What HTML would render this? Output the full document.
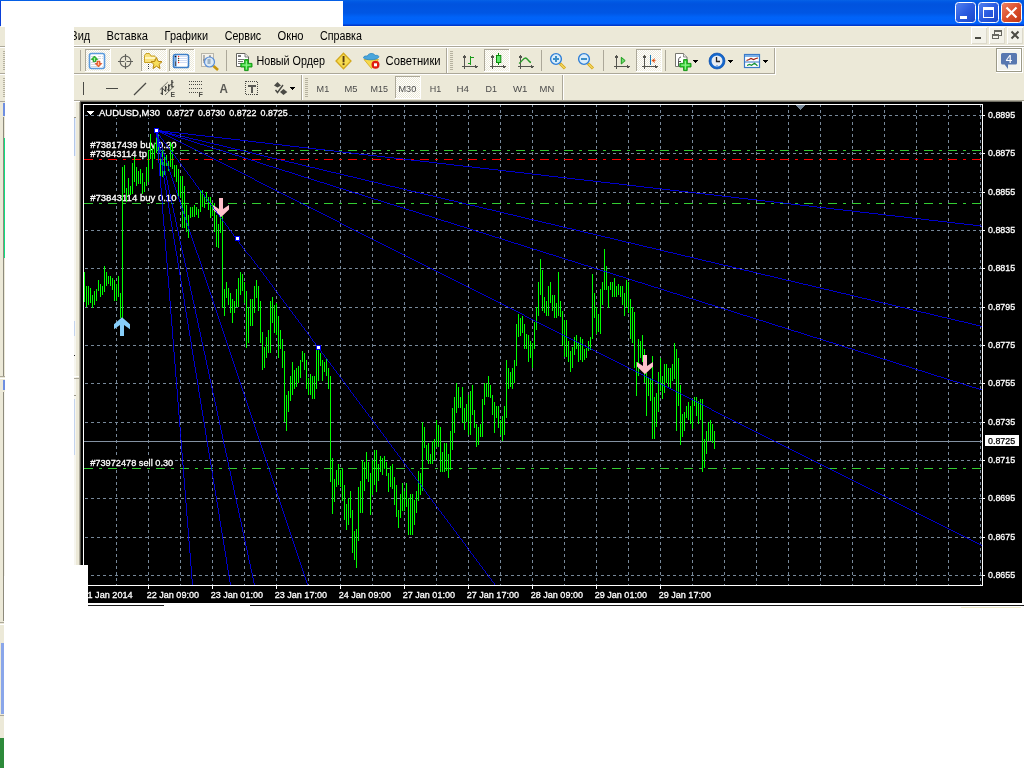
<!DOCTYPE html>
<html><head><meta charset="utf-8"><title>AUDUSD,M30</title>
<style>
html,body{margin:0;padding:0;background:#fff;}
body{width:1024px;height:768px;overflow:hidden;}
svg{display:block;}
text{font-family:"Liberation Sans",sans-serif;white-space:pre;}
svg{will-change:transform;}
.c{shape-rendering:crispEdges;}
</style></head><body>
<svg width="1024" height="768" viewBox="0 0 1024 768">
<defs>
<linearGradient id="tg" x1="0" y1="0" x2="0" y2="1">
<stop offset="0" stop-color="#0662e6"/><stop offset="0.07" stop-color="#0058e4"/><stop offset="0.16" stop-color="#0053de"/><stop offset="0.5" stop-color="#0056e4"/><stop offset="0.66" stop-color="#0063f8"/><stop offset="0.9" stop-color="#0062fc"/><stop offset="0.95" stop-color="#0048dc"/><stop offset="1" stop-color="#0030c0"/>
</linearGradient>
<linearGradient id="bb" x1="0" y1="0" x2="1" y2="1">
<stop offset="0" stop-color="#5583f0"/><stop offset="0.5" stop-color="#2a5be0"/><stop offset="1" stop-color="#1a45c8"/>
</linearGradient>
<linearGradient id="rb" x1="0" y1="0" x2="1" y2="1">
<stop offset="0" stop-color="#ee8468"/><stop offset="0.5" stop-color="#dc4f2c"/><stop offset="1" stop-color="#bf3512"/>
</linearGradient>
<pattern id="hatch" width="2" height="2" patternUnits="userSpaceOnUse"><rect width="2" height="2" fill="#ffffff"/><rect width="1" height="1" fill="#ece9d8"/><rect x="1" y="1" width="1" height="1" fill="#ece9d8"/></pattern>
</defs>

<g id="frame" class="c">
<rect x="0" y="0" width="1024" height="768" fill="#ffffff"/>
<rect x="0" y="0" width="1024" height="26" fill="url(#tg)"/>
<rect x="0" y="26" width="1024" height="77" fill="#ece9d8"/>
<rect x="343" y="26" width="681" height="1" fill="#fbf6e2"/>
</g>
<g id="titlebuttons">
<rect x="955.5" y="2.5" width="20" height="20" rx="3" ry="3" fill="url(#bb)" stroke="#fff" stroke-width="1"/>
<rect x="978.5" y="2.5" width="20" height="20" rx="3" ry="3" fill="url(#bb)" stroke="#fff" stroke-width="1"/>
<rect x="1001.5" y="2.5" width="20" height="20" rx="3" ry="3" fill="url(#rb)" stroke="#fff" stroke-width="1"/>
<rect class="c" x="960" y="16" width="7" height="3" fill="#fff"/>
<rect x="983.5" y="7.5" width="10" height="10" fill="none" stroke="#fff" stroke-width="1" class="c"/><rect class="c" x="983" y="7" width="11" height="3" fill="#fff"/>
<path d="M1006.5 7.5 L1016.5 17.5 M1016.5 7.5 L1006.5 17.5" stroke="#fff" stroke-width="2.2" fill="none"/>
</g>
<g id="menubar">
<g class="c">
<rect x="74" y="45" width="950" height="1" fill="#ffffff"/>
<rect x="74" y="46" width="950" height="1" fill="#aca899"/>
<rect x="74" y="47" width="950" height="1" fill="#ffffff"/>
<rect x="971" y="27" width="16" height="17" fill="#f3f2e9"/>
<rect x="971" y="27" width="16" height="1" fill="#ffffff"/>
<rect x="971" y="27" width="1" height="17" fill="#ffffff"/>
<rect x="972" y="43" width="15" height="1" fill="#dcd9cc"/>
<rect x="986" y="28" width="1" height="16" fill="#dcd9cc"/>
<rect x="989" y="27" width="16" height="17" fill="#f3f2e9"/>
<rect x="989" y="27" width="16" height="1" fill="#ffffff"/>
<rect x="989" y="27" width="1" height="17" fill="#ffffff"/>
<rect x="990" y="43" width="15" height="1" fill="#dcd9cc"/>
<rect x="1004" y="28" width="1" height="16" fill="#dcd9cc"/>
<rect x="1007" y="27" width="16" height="17" fill="#f3f2e9"/>
<rect x="1007" y="27" width="16" height="1" fill="#ffffff"/>
<rect x="1007" y="27" width="1" height="17" fill="#ffffff"/>
<rect x="1008" y="43" width="15" height="1" fill="#dcd9cc"/>
<rect x="1022" y="28" width="1" height="16" fill="#dcd9cc"/>
<rect x="975" y="37" width="6" height="2" fill="#4b4b43"/>
<rect x="992.5" y="34.5" width="6" height="4" fill="none" stroke="#66665e" stroke-width="1"/><rect x="992" y="34" width="7" height="2" fill="#66665e"/>
<rect x="994" y="30" width="8" height="2" fill="#66665e"/><rect x="1001" y="30" width="1" height="6" fill="#66665e"/><rect x="994" y="30" width="1" height="4" fill="#66665e"/><rect x="999" y="35" width="3" height="1" fill="#66665e"/>
</g>
<path d="M1011.5 31.5 L1018.5 38.5 M1018.5 31.5 L1011.5 38.5" stroke="#4b4b43" stroke-width="2" fill="none"/>
<text x="70.3" y="40" font-size="12" fill="#000" textLength="20" lengthAdjust="spacingAndGlyphs">Вид</text>
<text x="106.5" y="40" font-size="12" fill="#000" textLength="41.5" lengthAdjust="spacingAndGlyphs">Вставка</text>
<text x="164.6" y="40" font-size="12" fill="#000" textLength="43.4" lengthAdjust="spacingAndGlyphs">Графики</text>
<text x="224.7" y="40" font-size="12" fill="#000" textLength="36.5" lengthAdjust="spacingAndGlyphs">Сервис</text>
<text x="277.6" y="40" font-size="12" fill="#000" textLength="26" lengthAdjust="spacingAndGlyphs">Окно</text>
<text x="320" y="40" font-size="12" fill="#000" textLength="42" lengthAdjust="spacingAndGlyphs">Справка</text>
</g>
<g id="toolbars" class="c">
<rect x="74" y="73" width="701" height="1" fill="#aca899"/>
<rect x="74" y="74" width="702" height="1" fill="#ffffff"/>
<rect x="446" y="48" width="1" height="25" fill="#aca899"/>
<rect x="447" y="48" width="1" height="25" fill="#ffffff"/>
<rect x="774" y="48" width="1" height="26" fill="#aca899"/>
<rect x="775" y="47" width="1" height="28" fill="#ffffff"/>
<rect x="301" y="75" width="1" height="25" fill="#aca899"/>
<rect x="302" y="75" width="1" height="25" fill="#ffffff"/>
<rect x="562" y="75" width="1" height="25" fill="#aca899"/>
<rect x="563" y="75" width="1" height="25" fill="#ffffff"/>
<rect x="80" y="50" width="1" height="21" fill="#aca899"/>
<rect x="226" y="50" width="1" height="21" fill="#aca899"/>
<rect x="541" y="50" width="1" height="21" fill="#aca899"/>
<rect x="603" y="50" width="1" height="21" fill="#aca899"/>
<rect x="665" y="50" width="1" height="21" fill="#aca899"/>
<rect x="450" y="51" width="3" height="1" fill="#b5b19f"/>
<rect x="450" y="53" width="3" height="1" fill="#b5b19f"/>
<rect x="450" y="55" width="3" height="1" fill="#b5b19f"/>
<rect x="450" y="57" width="3" height="1" fill="#b5b19f"/>
<rect x="450" y="59" width="3" height="1" fill="#b5b19f"/>
<rect x="450" y="61" width="3" height="1" fill="#b5b19f"/>
<rect x="450" y="63" width="3" height="1" fill="#b5b19f"/>
<rect x="450" y="65" width="3" height="1" fill="#b5b19f"/>
<rect x="450" y="67" width="3" height="1" fill="#b5b19f"/>
<rect x="450" y="69" width="3" height="1" fill="#b5b19f"/>
<rect x="305" y="78" width="3" height="1" fill="#b5b19f"/>
<rect x="305" y="80" width="3" height="1" fill="#b5b19f"/>
<rect x="305" y="82" width="3" height="1" fill="#b5b19f"/>
<rect x="305" y="84" width="3" height="1" fill="#b5b19f"/>
<rect x="305" y="86" width="3" height="1" fill="#b5b19f"/>
<rect x="305" y="88" width="3" height="1" fill="#b5b19f"/>
<rect x="305" y="90" width="3" height="1" fill="#b5b19f"/>
<rect x="305" y="92" width="3" height="1" fill="#b5b19f"/>
<rect x="305" y="94" width="3" height="1" fill="#b5b19f"/>
<rect x="305" y="96" width="3" height="1" fill="#b5b19f"/>
<rect x="85" y="49" width="26" height="23" fill="url(#hatch)"/>
<rect x="85" y="49" width="26" height="1" fill="#aca899"/>
<rect x="85" y="49" width="1" height="23" fill="#aca899"/>
<rect x="85" y="71" width="26" height="1" fill="#ffffff"/>
<rect x="110" y="49" width="1" height="23" fill="#ffffff"/>
<rect x="141" y="49" width="26" height="23" fill="url(#hatch)"/>
<rect x="141" y="49" width="26" height="1" fill="#aca899"/>
<rect x="141" y="49" width="1" height="23" fill="#aca899"/>
<rect x="141" y="71" width="26" height="1" fill="#ffffff"/>
<rect x="166" y="49" width="1" height="23" fill="#ffffff"/>
<rect x="169" y="49" width="26" height="23" fill="url(#hatch)"/>
<rect x="169" y="49" width="26" height="1" fill="#aca899"/>
<rect x="169" y="49" width="1" height="23" fill="#aca899"/>
<rect x="169" y="71" width="26" height="1" fill="#ffffff"/>
<rect x="194" y="49" width="1" height="23" fill="#ffffff"/>
<rect x="484" y="49" width="26" height="23" fill="url(#hatch)"/>
<rect x="484" y="49" width="26" height="1" fill="#aca899"/>
<rect x="484" y="49" width="1" height="23" fill="#aca899"/>
<rect x="484" y="71" width="26" height="1" fill="#ffffff"/>
<rect x="509" y="49" width="1" height="23" fill="#ffffff"/>
<rect x="636" y="49" width="26" height="23" fill="url(#hatch)"/>
<rect x="636" y="49" width="26" height="1" fill="#aca899"/>
<rect x="636" y="49" width="1" height="23" fill="#aca899"/>
<rect x="636" y="71" width="26" height="1" fill="#ffffff"/>
<rect x="661" y="49" width="1" height="23" fill="#ffffff"/>
<rect x="395" y="76" width="26" height="23" fill="url(#hatch)"/>
<rect x="395" y="76" width="26" height="1" fill="#aca899"/>
<rect x="395" y="76" width="1" height="23" fill="#aca899"/>
<rect x="395" y="98" width="26" height="1" fill="#ffffff"/>
<rect x="420" y="76" width="1" height="23" fill="#ffffff"/>
<rect x="996" y="48" width="26" height="24" fill="#f3f3ec"/>
<rect x="997" y="49" width="24" height="22" fill="#ffffff"/>
<rect x="998" y="50" width="22" height="20" fill="#f3f3ec"/>
<rect x="996" y="48" width="26" height="1" fill="#9c9a88"/>
<rect x="996" y="48" width="1" height="24" fill="#9c9a88"/>
<rect x="996" y="71" width="26" height="1" fill="#9c9a88"/>
<rect x="1021" y="48" width="1" height="24" fill="#9c9a88"/>
<rect x="996" y="72" width="27" height="1" fill="#ffffff"/>
<rect x="1022" y="48" width="1" height="25" fill="#ffffff"/>
</g>
<g id="icons">
<rect x="89.5" y="53.5" width="15" height="15" rx="2" fill="#fff" stroke="#5b9bdc" stroke-width="1.6"/>
<g class="c" fill="#d5d9df"><rect x="91" y="56" width="3" height="1"/><rect x="98" y="56" width="3" height="1"/><rect x="102" y="56" width="1" height="1"/><rect x="98" y="58" width="3" height="1"/><rect x="102" y="58" width="1" height="1"/><rect x="91" y="62" width="4" height="1"/><rect x="91" y="64" width="6" height="1"/><rect x="91" y="66" width="6" height="1"/><rect x="102" y="66" width="1" height="1"/></g>
<polygon points="94.5,56 97.8,59.4 96,59.4 96,61.6 93,61.6 93,59.4 91.2,59.4" fill="#3cc83c" stroke="#0c8a0c" stroke-width=".7"/><rect x="94" y="58" width="1" height="3" fill="#a8f0a8"/>
<polygon points="98.5,67 101.8,63.5 100,63.5 100,61.2 97,61.2 97,63.5 95.2,63.5" fill="#f4703c" stroke="#d04010" stroke-width=".7"/><rect x="98" y="62" width="1" height="3" fill="#ffc0a0"/>
<circle cx="125.5" cy="61.5" r="5.4" fill="none" stroke="#60605a" stroke-width="1.1"/><path d="M125.5 54V69M118 61.5H133" stroke="#60605a" stroke-width="1.1" fill="none"/><rect x="124.5" y="60.5" width="2" height="2" fill="#ece9d8"/>
<path d="M144.5 62.5V55.5L146 53.5H149.5L151 56H155V62.5Z" fill="#f8e07a" stroke="#c9a227" stroke-width="1"/><rect x="145" y="57" width="10" height="2" fill="#fff6c0"/>
<g class="c" fill="#333"><rect x="148" y="64" width="1" height="1"/><rect x="148" y="66" width="1" height="1"/><rect x="148" y="68" width="1" height="1"/></g>
<polygon points="156.5,57.5 158.2,61.4 162,61.7 159.1,64.3 160,68.5 156.5,66.2 153,68.5 153.9,64.3 151,61.7 154.8,61.4" fill="#f7de5a" stroke="#b8860b" stroke-width="1"/>
<rect x="173.5" y="54.5" width="15" height="13" rx="1.8" fill="#fff" stroke="#3d7fc8" stroke-width="1.6"/><rect x="174.3" y="55.3" width="2.4" height="11.4" fill="#6a9ee0"/><rect x="175" y="61.5" width="1" height="4.5" fill="#555"/><circle cx="175.5" cy="56.5" r=".8" fill="#111"/>
<g class="c" fill="#cfdcf5"><rect x="180" y="56" width="8" height="1"/><rect x="180" y="58" width="8" height="1"/><rect x="180" y="60" width="8" height="1"/><rect x="180" y="62" width="8" height="1"/></g>
<circle cx="178.6" cy="56.5" r=".75" fill="#f02020"/><circle cx="178.6" cy="58.5" r=".75" fill="#334422"/><circle cx="178.6" cy="60.5" r=".75" fill="#334422"/><circle cx="178.6" cy="62.5" r=".75" fill="#f02020"/>
<rect x="201.5" y="53.5" width="12" height="13" fill="#f4f2ea" stroke="#b9b6aa" stroke-width="1"/><path d="M204 55V63M203 60H205M210 55V62M209 57H211" stroke="#777" stroke-width="1" fill="none"/>
<path d="M213.5 66L218 70" stroke="#c8960c" stroke-width="2.6"/><circle cx="209.5" cy="62" r="5" fill="#d8e8f6" fill-opacity=".9" stroke="#5b8fd8" stroke-width="1.2"/><rect x="207.5" y="59" width="3" height="5" fill="#9ab0c4"/>
<path d="M236.5 53.5H245L248.5 57V66.5H236.5Z" fill="#fff" stroke="#66665f" stroke-width="1"/><path d="M245 53.5V57H248.5" fill="#e8e8e8" stroke="#66665f" stroke-width=".8"/><g class="c" fill="#777"><rect x="238" y="55" width="3" height="2"/><rect x="238" y="59" width="6" height="1"/><rect x="238" y="61" width="5" height="1"/><rect x="238" y="63" width="3" height="1"/></g>
<path d="M244.6 59.6H248.2V63.4H252V67H248.2V70.6H244.6V67H240.8V63.4H244.6Z" fill="#2fd02f" stroke="#0f8f0f" stroke-width=".9"/><path d="M246.4 61V69.4M242.2 65.2H250.6" stroke="#8cf08c" stroke-width="1.2" fill="none"/>
<polygon points="343.5,53.2 351,61 343.5,68.8 336,61" fill="#f7dc50" stroke="#d4a91e" stroke-width="1.3"/><rect x="342.6" y="56" width="1.9" height="6.3" fill="#5a3c10"/><rect x="342.6" y="63.2" width="1.9" height="1.9" fill="#5a3c10"/>
<polygon points="364,59.5 378.5,59.5 371.5,68.5" fill="#f7d94a" stroke="#d4a91e" stroke-width=".8"/><path d="M363.5 58C363.5 55.5 366.5 56 367.5 56C368 53 374 52.5 375 55.5C377 55 379.5 55.5 378.5 57.5C376 60.5 366 60.5 363.5 58Z" fill="#4aa6dc" stroke="#2a86c0" stroke-width=".8"/>
<circle cx="375.5" cy="64.8" r="4" fill="#e01c10"/><rect x="374" y="63.3" width="3" height="3" fill="#fff"/>
<g class="c" fill="#55554f"><rect x="464" y="55" width="1.3" height="14"/><rect x="462" y="66" width="15" height="1.3"/><polygon points="462.5,58 464.6,54.5 466.8,58"/><polygon points="474.5,64.2 478,66.6 474.5,69"/></g>
<g class="c" fill="#1a9a1a"><rect x="470" y="56" width="1.3" height="9"/><rect x="471" y="57" width="2.5" height="1.3"/><rect x="468" y="63" width="2.5" height="1.3"/></g>
<g class="c" fill="#55554f"><rect x="492" y="55" width="1.3" height="14"/><rect x="490" y="66" width="15" height="1.3"/><polygon points="490.5,58 492.6,54.5 494.8,58"/><polygon points="502.5,64.2 506,66.6 502.5,69"/></g>
<rect class="c" x="498" y="53" width="1.3" height="12" fill="#0a8a0a"/><rect x="496.5" y="55.5" width="4.3" height="7" fill="#5fe86a" stroke="#0a8a0a" stroke-width="1"/>
<g class="c" fill="#55554f"><rect x="520" y="55" width="1.3" height="14"/><rect x="518" y="66" width="15" height="1.3"/><polygon points="518.5,58 520.6,54.5 522.8,58"/><polygon points="530.5,64.2 534,66.6 530.5,69"/></g>
<path d="M519 63.5C522 62 523 58 525.5 58C527.5 58 528.5 62 531 62.5" fill="none" stroke="#2a9a2a" stroke-width="1.3"/>
<path d="M560 63.5L565 68.5" stroke="#d8a818" stroke-width="3"/><path d="M560.6 64.1L564.6 68.1" stroke="#f5e070" stroke-width="1.2"/>
<circle cx="556" cy="59" r="5.4" fill="#dbeefb" stroke="#2f7fd6" stroke-width="1.4"/>
<rect x="553" y="58" width="6" height="2" fill="#3d8fc8"/>
<rect x="555" y="56" width="2" height="6" fill="#3d8fc8"/>
<path d="M588 63.5L593 68.5" stroke="#d8a818" stroke-width="3"/><path d="M588.6 64.1L592.6 68.1" stroke="#f5e070" stroke-width="1.2"/>
<circle cx="584" cy="59" r="5.4" fill="#dbeefb" stroke="#2f7fd6" stroke-width="1.4"/>
<rect x="581" y="58" width="6" height="2" fill="#3d8fc8"/>
<g class="c" fill="#55554f"><rect x="616" y="55" width="1.3" height="14"/><rect x="614" y="66" width="15" height="1.3"/><polygon points="614.5,58 616.6,54.5 618.8,58"/><polygon points="626.5,64.2 630,66.6 626.5,69"/></g>
<polygon points="621.3,57.3 625.2,60.6 621.3,64" fill="#6fdc6f" stroke="#1a9a1a" stroke-width="1"/>
<g class="c" fill="#55554f"><rect x="644" y="55" width="1.3" height="14"/><rect x="642" y="66" width="15" height="1.3"/><polygon points="642.5,58 644.6,54.5 646.8,58"/><polygon points="654.5,64.2 658,66.6 654.5,69"/></g>
<rect class="c" x="650" y="55" width="1.3" height="10" fill="#1a7ab8"/><polygon points="651.5,60.5 655,58 654.3,60 656.2,60.5 654.3,61.2 655,63.2" fill="#e0551a"/>
<path d="M675.5 53.5H683.5L687 57V66.5H675.5Z" fill="#fff" stroke="#77776f" stroke-width="1"/><path d="M683.5 53.5V57H687" fill="#e8e8e8" stroke="#77776f" stroke-width=".8"/><path d="M681 57C678.5 57 678.5 60 678.5 61.5V66M678 61.5H681" stroke="#555" stroke-width="1" fill="none"/>
<path d="M683.6 59.6H687.2V63.4H691V67H687.2V70.6H683.6V67H679.8V63.4H683.6Z" fill="#2fd02f" stroke="#0f8f0f" stroke-width=".9"/><path d="M685.4 61V69.4M681.2 65.2H689.6" stroke="#8cf08c" stroke-width="1.2" fill="none"/>
<polygon class="c" points="693,60 698,60 695.5,63" fill="#000"/>
<polygon class="c" points="728,60 733,60 730.5,63" fill="#000"/>
<polygon class="c" points="763,60 768,60 765.5,63" fill="#000"/>
<polygon class="c" points="290,87 295,87 292.5,90" fill="#000"/>
<circle cx="717" cy="61" r="6.8" fill="#e9edf2" stroke="#1668cc" stroke-width="2.6"/><circle cx="717" cy="61" r="8" fill="none" stroke="#0a4aa8" stroke-width=".6"/><path d="M716.5 57V61.5H720" stroke="#222" stroke-width="1.3" fill="none"/><rect x="716" y="65" width="2" height="1" fill="#8cb4ee"/>
<rect x="744.5" y="54.5" width="15" height="13" fill="#fff" stroke="#3a7ac8" stroke-width="1.2"/><rect x="745" y="55" width="14" height="2" fill="#7ab0e8"/><rect x="745" y="61.5" width="14" height="1" fill="#3a7ac8"/>
<path d="M746.5 60.5L749 59.5L751 58.5L753.5 59.5L756 58.5L758 58" stroke="#a02010" stroke-width="1.2" fill="none"/><path d="M747 65.5L749.5 64.5L751.5 65.3L754.5 63.3L757.5 65.8" stroke="#109030" stroke-width="1.2" fill="none"/>
<path d="M1002.5 53H1015.5Q1017 53 1017 54.5V63Q1017 64.5 1015.5 64.5H1008V69L1004.6 64.5H1002.5Q1001 64.5 1001 63V54.5Q1001 53 1002.5 53Z" fill="#5878b0"/>
<text x="1005.7" y="63" font-size="11" fill="#fff" stroke="#fff" stroke-width=".1" textLength="6.4" lengthAdjust="spacingAndGlyphs">4</text>
<g class="c" fill="#4a4a45"><rect x="83" y="82" width="1.3" height="13"/><rect x="106" y="88" width="12" height="1.3"/></g>
<path d="M134 95L146 83" stroke="#4a4a45" stroke-width="1.2"/>
<path d="M159.8 89.8L167.8 82M165 95L174.2 86.2" stroke="#66665f" stroke-width=".9" fill="none"/>
<path d="M162.3 87.5V95M165.6 86V91.8M168.7 84.2V91M171.9 80V87.6" stroke="#4a4a45" stroke-width="1.4" fill="none"/><path d="M160.6 93.4H162.3M162.3 89.2H164M164 90.4H165.6M165.6 87.8H167M167.2 89.8H168.7M168.7 85.6H170.2M170.4 84.6H171.9M171.9 82.4H173.4M171.9 86.6H173.6" stroke="#4a4a45" stroke-width="1.1" fill="none"/>
<text x="170.6" y="97" font-size="7.5" font-weight="bold" fill="#4a4a45" textLength="4.6" lengthAdjust="spacingAndGlyphs">E</text>
<line class="c" x1="189" x2="202" y1="81.5" y2="81.5" stroke="#4a4a45" stroke-width="1" stroke-dasharray="1 1"/>
<line class="c" x1="189" x2="202" y1="84.5" y2="84.5" stroke="#4a4a45" stroke-width="1" stroke-dasharray="1 1"/>
<line class="c" x1="189" x2="202" y1="88.5" y2="88.5" stroke="#4a4a45" stroke-width="1" stroke-dasharray="1 1"/>
<line class="c" x1="189" x2="198" y1="92.5" y2="92.5" stroke="#4a4a45" stroke-width="1" stroke-dasharray="1 1"/>
<text x="198.6" y="97" font-size="7.5" font-weight="bold" fill="#4a4a45" textLength="4.4" lengthAdjust="spacingAndGlyphs">F</text>
<text x="219.6" y="93" font-size="12" font-weight="bold" fill="#5a5a55" textLength="8.4" lengthAdjust="spacingAndGlyphs">A</text>
<rect class="c" x="245.5" y="81.5" width="12" height="13" fill="none" stroke="#4a4a45" stroke-width="1" stroke-dasharray="1 1"/><rect class="c" x="245" y="81" width="2" height="1" fill="#4a4a45"/>
<g class="c" fill="#5a5a55"><rect x="248" y="85" width="8" height="1.6"/><rect x="251.2" y="85" width="1.8" height="8"/></g>
<polygon points="277.5,82 281,85.5 277.5,87.5 274,85.5" fill="#4a4a45"/><polygon points="283.5,89 287.3,92 283.5,95 280,92" fill="#4a4a45"/><path d="M275.5 90L277.5 92.5L283 85" stroke="#4a4a45" stroke-width="1.4" fill="none"/>
</g>
<g id="tbtext">
<text x="256.4" y="65" font-size="12" fill="#000" textLength="68.6" lengthAdjust="spacingAndGlyphs">Новый Ордер</text>
<text x="385.6" y="65" font-size="12" fill="#000" textLength="55" lengthAdjust="spacingAndGlyphs">Советники</text>
<text x="316.6" y="92" font-size="9.7" fill="#4a4a4a" textLength="12.6" lengthAdjust="spacingAndGlyphs">M1</text>
<text x="344.4" y="92" font-size="9.7" fill="#4a4a4a" textLength="13" lengthAdjust="spacingAndGlyphs">M5</text>
<text x="370.6" y="92" font-size="9.7" fill="#4a4a4a" textLength="17.5" lengthAdjust="spacingAndGlyphs">M15</text>
<text x="398.5" y="92" font-size="9.7" fill="#4a4a4a" textLength="17.8" lengthAdjust="spacingAndGlyphs">M30</text>
<text x="429.7" y="92" font-size="9.7" fill="#4a4a4a" textLength="11.5" lengthAdjust="spacingAndGlyphs">H1</text>
<text x="456.5" y="92" font-size="9.7" fill="#4a4a4a" textLength="12.5" lengthAdjust="spacingAndGlyphs">H4</text>
<text x="485.5" y="92" font-size="9.7" fill="#4a4a4a" textLength="11.5" lengthAdjust="spacingAndGlyphs">D1</text>
<text x="513" y="92" font-size="9.7" fill="#4a4a4a" textLength="14.5" lengthAdjust="spacingAndGlyphs">W1</text>
<text x="539.6" y="92" font-size="9.7" fill="#4a4a4a" textLength="14.7" lengthAdjust="spacingAndGlyphs">MN</text>
</g>
<g id="chartwin" class="c">
<rect x="74" y="102" width="5" height="463" fill="#ece9d8"/>
<rect x="74" y="102" width="2" height="463" fill="#f6f5ee"/>
<rect x="74" y="100" width="950" height="1" fill="#aca899"/>
<rect x="74" y="101" width="6" height="1" fill="#ffffff"/>
<rect x="80" y="101" width="944" height="1" fill="#716f64"/>
<rect x="79" y="102" width="1" height="501" fill="#aca899"/>
<rect x="80" y="102" width="1" height="501" fill="#55534a"/>
<rect x="81" y="102" width="941" height="501" fill="#000"/>
<rect x="1022" y="101" width="1" height="504" fill="#ffffff"/>
<rect x="1023" y="101" width="1" height="504" fill="#ffffff"/>
<rect x="74" y="118" width="1" height="38" fill="#b4c8ea"/>
<rect x="75" y="118" width="1" height="38" fill="#e6ecf6"/>
<rect x="74" y="117" width="2" height="1" fill="#9a978a"/>
<rect x="74" y="321" width="1" height="15" fill="#c4d4ee"/>
<rect x="74" y="355" width="1" height="1" fill="#222"/>
<rect x="74" y="376" width="5" height="1" fill="#ffffff"/>
<rect x="74" y="378" width="5" height="1" fill="#aca899"/>
<rect x="74" y="399" width="1" height="56" fill="#c4d4ee"/>
<rect x="74" y="395" width="2" height="1" fill="#9a978a"/>
</g>
<g id="chart">
<g class="c">
<line x1="85" x2="982" y1="115.5" y2="115.5" stroke="#778899" stroke-width="1" stroke-dasharray="3 3"/>
<line x1="85" x2="982" y1="153.5" y2="153.5" stroke="#778899" stroke-width="1" stroke-dasharray="3 3"/>
<line x1="85" x2="982" y1="192.5" y2="192.5" stroke="#778899" stroke-width="1" stroke-dasharray="3 3"/>
<line x1="85" x2="982" y1="230.5" y2="230.5" stroke="#778899" stroke-width="1" stroke-dasharray="3 3"/>
<line x1="85" x2="982" y1="268.5" y2="268.5" stroke="#778899" stroke-width="1" stroke-dasharray="3 3"/>
<line x1="85" x2="982" y1="307.5" y2="307.5" stroke="#778899" stroke-width="1" stroke-dasharray="3 3"/>
<line x1="85" x2="982" y1="345.5" y2="345.5" stroke="#778899" stroke-width="1" stroke-dasharray="3 3"/>
<line x1="85" x2="982" y1="383.5" y2="383.5" stroke="#778899" stroke-width="1" stroke-dasharray="3 3"/>
<line x1="85" x2="982" y1="422.5" y2="422.5" stroke="#778899" stroke-width="1" stroke-dasharray="3 3"/>
<line x1="85" x2="982" y1="460.5" y2="460.5" stroke="#778899" stroke-width="1" stroke-dasharray="3 3"/>
<line x1="85" x2="982" y1="498.5" y2="498.5" stroke="#778899" stroke-width="1" stroke-dasharray="3 3"/>
<line x1="85" x2="982" y1="537.5" y2="537.5" stroke="#778899" stroke-width="1" stroke-dasharray="3 3"/>
<line x1="85" x2="982" y1="575.5" y2="575.5" stroke="#778899" stroke-width="1" stroke-dasharray="3 3"/>
<line x1="116.5" x2="116.5" y1="104" y2="585" stroke="#778899" stroke-width="1" stroke-dasharray="3 3"/>
<line x1="148.5" x2="148.5" y1="104" y2="585" stroke="#778899" stroke-width="1" stroke-dasharray="3 3"/>
<line x1="180.5" x2="180.5" y1="104" y2="585" stroke="#778899" stroke-width="1" stroke-dasharray="3 3"/>
<line x1="212.5" x2="212.5" y1="104" y2="585" stroke="#778899" stroke-width="1" stroke-dasharray="3 3"/>
<line x1="244.5" x2="244.5" y1="104" y2="585" stroke="#778899" stroke-width="1" stroke-dasharray="3 3"/>
<line x1="276.5" x2="276.5" y1="104" y2="585" stroke="#778899" stroke-width="1" stroke-dasharray="3 3"/>
<line x1="308.5" x2="308.5" y1="104" y2="585" stroke="#778899" stroke-width="1" stroke-dasharray="3 3"/>
<line x1="340.5" x2="340.5" y1="104" y2="585" stroke="#778899" stroke-width="1" stroke-dasharray="3 3"/>
<line x1="372.5" x2="372.5" y1="104" y2="585" stroke="#778899" stroke-width="1" stroke-dasharray="3 3"/>
<line x1="404.5" x2="404.5" y1="104" y2="585" stroke="#778899" stroke-width="1" stroke-dasharray="3 3"/>
<line x1="436.5" x2="436.5" y1="104" y2="585" stroke="#778899" stroke-width="1" stroke-dasharray="3 3"/>
<line x1="468.5" x2="468.5" y1="104" y2="585" stroke="#778899" stroke-width="1" stroke-dasharray="3 3"/>
<line x1="500.5" x2="500.5" y1="104" y2="585" stroke="#778899" stroke-width="1" stroke-dasharray="3 3"/>
<line x1="532.5" x2="532.5" y1="104" y2="585" stroke="#778899" stroke-width="1" stroke-dasharray="3 3"/>
<line x1="564.5" x2="564.5" y1="104" y2="585" stroke="#778899" stroke-width="1" stroke-dasharray="3 3"/>
<line x1="596.5" x2="596.5" y1="104" y2="585" stroke="#778899" stroke-width="1" stroke-dasharray="3 3"/>
<line x1="628.5" x2="628.5" y1="104" y2="585" stroke="#778899" stroke-width="1" stroke-dasharray="3 3"/>
<line x1="660.5" x2="660.5" y1="104" y2="585" stroke="#778899" stroke-width="1" stroke-dasharray="3 3"/>
<line x1="692.5" x2="692.5" y1="104" y2="585" stroke="#778899" stroke-width="1" stroke-dasharray="3 3"/>
<line x1="724.5" x2="724.5" y1="104" y2="585" stroke="#778899" stroke-width="1" stroke-dasharray="3 3"/>
<line x1="756.5" x2="756.5" y1="104" y2="585" stroke="#778899" stroke-width="1" stroke-dasharray="3 3"/>
<line x1="788.5" x2="788.5" y1="104" y2="585" stroke="#778899" stroke-width="1" stroke-dasharray="3 3"/>
<line x1="820.5" x2="820.5" y1="104" y2="585" stroke="#778899" stroke-width="1" stroke-dasharray="3 3"/>
<line x1="852.5" x2="852.5" y1="104" y2="585" stroke="#778899" stroke-width="1" stroke-dasharray="3 3"/>
<line x1="884.5" x2="884.5" y1="104" y2="585" stroke="#778899" stroke-width="1" stroke-dasharray="3 3"/>
<line x1="916.5" x2="916.5" y1="104" y2="585" stroke="#778899" stroke-width="1" stroke-dasharray="3 3"/>
<line x1="948.5" x2="948.5" y1="104" y2="585" stroke="#778899" stroke-width="1" stroke-dasharray="3 3"/>
<line x1="980.5" x2="980.5" y1="104" y2="585" stroke="#778899" stroke-width="1" stroke-dasharray="3 3"/>
<polygon points="795.5,105 805.5,105 800.5,110.3" fill="#778899"/>
<rect x="83" y="104" width="900" height="1" fill="#ffffff"/>
<rect x="83" y="104" width="1" height="482" fill="#ffffff"/>
<rect x="982" y="104" width="1" height="482" fill="#ffffff"/>
<rect x="83" y="585" width="900" height="1" fill="#ffffff"/>
<rect x="983" y="115" width="2" height="1" fill="#ffffff"/>
<rect x="983" y="153" width="2" height="1" fill="#ffffff"/>
<rect x="983" y="192" width="2" height="1" fill="#ffffff"/>
<rect x="983" y="230" width="2" height="1" fill="#ffffff"/>
<rect x="983" y="268" width="2" height="1" fill="#ffffff"/>
<rect x="983" y="307" width="2" height="1" fill="#ffffff"/>
<rect x="983" y="345" width="2" height="1" fill="#ffffff"/>
<rect x="983" y="383" width="2" height="1" fill="#ffffff"/>
<rect x="983" y="422" width="2" height="1" fill="#ffffff"/>
<rect x="983" y="460" width="2" height="1" fill="#ffffff"/>
<rect x="983" y="498" width="2" height="1" fill="#ffffff"/>
<rect x="983" y="537" width="2" height="1" fill="#ffffff"/>
<rect x="983" y="575" width="2" height="1" fill="#ffffff"/>
<rect x="148" y="585" width="1" height="4" fill="#ffffff"/>
<rect x="212" y="585" width="1" height="4" fill="#ffffff"/>
<rect x="276" y="585" width="1" height="4" fill="#ffffff"/>
<rect x="340" y="585" width="1" height="4" fill="#ffffff"/>
<rect x="404" y="585" width="1" height="4" fill="#ffffff"/>
<rect x="468" y="585" width="1" height="4" fill="#ffffff"/>
<rect x="532" y="585" width="1" height="4" fill="#ffffff"/>
<rect x="596" y="585" width="1" height="4" fill="#ffffff"/>
<rect x="660" y="585" width="1" height="4" fill="#ffffff"/>
<rect x="84" y="441" width="898" height="1" fill="#8492a3"/>
<line x1="84" x2="982" y1="150.5" y2="150.5" stroke="#32cd32" stroke-width="1" stroke-dasharray="9 6 3 6"/>
<line x1="84" x2="982" y1="159.5" y2="159.5" stroke="#ff0000" stroke-width="1" stroke-dasharray="9 6 3 6"/>
<line x1="84" x2="982" y1="203.5" y2="203.5" stroke="#32cd32" stroke-width="1" stroke-dasharray="9 6 3 6"/>
<line x1="84" x2="982" y1="468.5" y2="468.5" stroke="#32cd32" stroke-width="1" stroke-dasharray="9 6 3 6"/>
<rect x="100" y="107" width="189" height="11" fill="#000"/>
<rect x="84" y="139" width="94" height="11" fill="#000"/>
<rect x="84" y="148" width="64" height="11" fill="#000"/>
<rect x="84" y="192" width="94" height="11" fill="#000"/>
<rect x="84" y="457" width="91" height="11" fill="#000"/>
</g>
<text x="90.2" y="148" font-size="9.6" fill="#fff" textLength="86.3" lengthAdjust="spacingAndGlyphs" stroke="#fff" stroke-width=".3">#73817439 buy 0.20</text>
<text x="90.2" y="157" font-size="9.6" fill="#fff" textLength="56.7" lengthAdjust="spacingAndGlyphs" stroke="#fff" stroke-width=".3">#73843114 tp</text>
<text x="90.2" y="201" font-size="9.6" fill="#fff" textLength="86.3" lengthAdjust="spacingAndGlyphs" stroke="#fff" stroke-width=".3">#73843114 buy 0.10</text>
<text x="90.2" y="466" font-size="9.6" fill="#fff" textLength="83" lengthAdjust="spacingAndGlyphs" stroke="#fff" stroke-width=".3">#73972478 sell 0.30</text>
<path class="c" d="M84.5 272V302M86.5 286V307M88.5 286V305M90.5 288V303M92.5 295V308M94.5 291V305M96.5 289V301M98.5 280V291M100.5 284V297M102.5 286V295M104.5 266V292M106.5 272V286M108.5 276V284M110.5 276V286M112.5 278V290M114.5 280V301M116.5 284V301M118.5 276V297M120.5 293V318M122.5 167V318M124.5 165V193M126.5 188V202M128.5 178V195M130.5 186V195M132.5 163V194M134.5 157V182M136.5 167V186M138.5 171V184M140.5 169V184M142.5 173V194M144.5 182V192M146.5 167V186M148.5 150V182M150.5 134V159M152.5 148V169M154.5 143V159M156.5 137V153M158.5 134V161M160.5 158V176M162.5 149V177M164.5 157V175M166.5 155V166M168.5 161V171M170.5 142V167M172.5 144V169M174.5 165V177M176.5 165V182M178.5 169V197M180.5 176V198M182.5 176V228M184.5 186V228M186.5 205V232M188.5 215V238M190.5 207V218M192.5 207V217M194.5 205V217M196.5 207V215M198.5 209V218M200.5 190V212M202.5 190V207M204.5 196V208M206.5 192V202M208.5 197V210M210.5 197V218M212.5 203V216M214.5 203V232M216.5 215V247M218.5 224V248M220.5 216V233M222.5 216V308M224.5 289V316M226.5 282V298M228.5 288V305M230.5 293V313M232.5 299V323M234.5 301V313M236.5 289V307M238.5 278V307M240.5 272V295M242.5 274V291M244.5 282V303M246.5 291V348M248.5 307V343M250.5 299V326M252.5 299V326M254.5 286V313M256.5 280V298M258.5 286V311M260.5 301V343M262.5 332V370M264.5 347V368M266.5 337V358M268.5 330V353M270.5 301V353M272.5 297V323M274.5 305V333M276.5 303V335M278.5 316V358M280.5 330V349M282.5 339V368M284.5 351V422M286.5 395V431M288.5 391V412M290.5 376V401M292.5 362V395M294.5 370V389M296.5 368V387M298.5 366V383M300.5 360V378M302.5 351V362M304.5 353V370M306.5 360V389M308.5 378V395M310.5 374V395M312.5 376V399M314.5 376V399M316.5 350V389M318.5 350V381M320.5 353V366M322.5 360V381M324.5 362V372M326.5 359V376M328.5 368V389M330.5 376V482M332.5 458V514M334.5 479V502M336.5 470V487M338.5 464V485M340.5 470V487M342.5 468V501M344.5 485V520M346.5 504V530M348.5 498V525M350.5 491V518M352.5 510V553M354.5 531V560M356.5 529V568M358.5 487V541M360.5 481V513M362.5 460V513M364.5 462V491M366.5 452V479M368.5 462V482M370.5 473V515M372.5 460V495M374.5 450V485M376.5 450V492M378.5 464V481M380.5 456V472M382.5 458V475M384.5 456V469M386.5 462V476M388.5 473V492M390.5 466V487M392.5 464V489M394.5 477V505M396.5 485V517M398.5 510V528M400.5 494V518M402.5 483V511M404.5 491V511M406.5 483V507M408.5 498V535M410.5 494V535M412.5 494V535M414.5 500V525M416.5 491V513M418.5 471V501M420.5 473V495M422.5 422V491M424.5 427V448M426.5 445V460M428.5 443V464M430.5 454V464M432.5 441V464M434.5 439V460M436.5 420V447M438.5 425V447M440.5 427V472M442.5 452V472M444.5 443V472M446.5 443V471M448.5 454V478M450.5 431V470M452.5 408V450M454.5 397V433M456.5 383V413M458.5 387V408M460.5 397V408M462.5 387V423M464.5 408V430M466.5 404V422M468.5 395V435M470.5 391V435M472.5 385V415M474.5 410V428M476.5 424V447M478.5 427V445M480.5 424V437M482.5 399V437M484.5 383V405M486.5 383V397M488.5 376V397M490.5 385V398M492.5 395V415M494.5 402V433M496.5 406V418M498.5 406V428M500.5 420V435M502.5 416V441M504.5 406V435M506.5 360V418M508.5 368V389M510.5 372V387M512.5 368V389M514.5 360V383M516.5 324V366M518.5 314V337M520.5 318V336M522.5 316V333M524.5 324V349M526.5 334V349M528.5 335V362M530.5 341V358M532.5 343V368M534.5 322V349M536.5 307V330M538.5 282V316M540.5 259V295M542.5 270V311M544.5 297V313M546.5 301V316M548.5 286V316M550.5 282V303M552.5 295V311M554.5 295V318M556.5 303V318M558.5 272V316M560.5 301V317M562.5 311V346M564.5 320V357M566.5 320V357M568.5 341V362M570.5 351V372M572.5 347V368M574.5 337V355M576.5 335V349M578.5 343V362M580.5 337V360M582.5 339V362M584.5 349V360M586.5 348V358M588.5 341V351M590.5 337V350M592.5 274V339M594.5 293V318M596.5 307V334M598.5 314V332M600.5 289V334M602.5 282V305M604.5 249V290M606.5 266V290M608.5 286V308M610.5 282V290M612.5 282V297M614.5 278V297M616.5 286V297M618.5 284V295M620.5 286V297M622.5 286V305M624.5 293V316M626.5 280V307M628.5 282V313M630.5 299V339M632.5 307V343M634.5 312V368M636.5 362V396M638.5 339V376M640.5 341V358M642.5 335V362M644.5 349V383M646.5 373V416M648.5 378V396M650.5 378V401M652.5 356V439M654.5 397V439M656.5 393V427M658.5 372V412M660.5 358V391M662.5 376V399M664.5 364V393M666.5 364V383M668.5 368V387M670.5 368V389M672.5 364V381M674.5 343V379M676.5 349V431M678.5 358V406M680.5 385V445M682.5 414V437M684.5 412V431M686.5 406V418M688.5 402V420M690.5 406V424M692.5 400V429M694.5 397V406M696.5 397V416M698.5 401V424M700.5 399V420M702.5 399V472M704.5 439V468M706.5 431V454M708.5 422V441M710.5 420V441M712.5 424V443M714.5 431V449" stroke="#00ff00" stroke-width="1" fill="none"/>
<polygon points="219,198 223,198 223,209 229,205 229,209.6 221.5,216.8 220.5,216.8 213,209.6 213,205 219,209" fill="#ffc0cb"/>
<polygon points="643,355 647,355 647,366 653,362 653,366.6 645.5,373.8 644.5,373.8 637,366.6 637,362 643,366" fill="#ffc0cb"/>
<polygon points="122,317.2 130,324.2 130,329.3 124,325.0 124,336.0 120,336.0 120,325.0 114,329.3 114,324.2" fill="#87cefa"/>
<line x1="156.5" y1="130.5" x2="982" y2="226.1" stroke="#0000ff" stroke-width=".8" class="c"/>
<line x1="156.5" y1="130.5" x2="982" y2="326.4" stroke="#0000ff" stroke-width=".8" class="c"/>
<line x1="156.5" y1="130.5" x2="982" y2="390" stroke="#0000ff" stroke-width=".8" class="c"/>
<line x1="156.5" y1="130.5" x2="982" y2="545.5" stroke="#0000ff" stroke-width=".8" class="c"/>
<line x1="156.5" y1="130.5" x2="495.2" y2="585" stroke="#0000ff" stroke-width=".8" class="c"/>
<line x1="156.5" y1="130.5" x2="307.5" y2="585" stroke="#0000ff" stroke-width=".8" class="c"/>
<line x1="156.5" y1="130.5" x2="254.5" y2="585" stroke="#0000ff" stroke-width=".8" class="c"/>
<line x1="156.5" y1="130.5" x2="230.5" y2="585" stroke="#0000ff" stroke-width=".8" class="c"/>
<line x1="156.5" y1="130.5" x2="192.5" y2="585" stroke="#0000ff" stroke-width=".8" class="c"/>
<rect class="c" x="154" y="128" width="5" height="5" fill="#0000ff"/><rect class="c" x="155" y="129" width="3" height="3" fill="#fff"/>
<rect class="c" x="235" y="236" width="5" height="5" fill="#0000ff"/><rect class="c" x="236" y="237" width="3" height="3" fill="#fff"/>
<rect class="c" x="316" y="345" width="5" height="5" fill="#0000ff"/><rect class="c" x="317" y="346" width="3" height="3" fill="#fff"/>
<polygon class="c" points="87,111 94,111 90.5,115" fill="#fff"/>
<text x="99" y="116" font-size="9.6" fill="#fff" textLength="61" lengthAdjust="spacingAndGlyphs" stroke="#fff" stroke-width=".3">AUDUSD,M30</text>
<text x="166.75" y="116" font-size="9.6" fill="#fff" textLength="27.25" lengthAdjust="spacingAndGlyphs" stroke="#fff" stroke-width=".3">0.8727</text>
<text x="198.0" y="116" font-size="9.6" fill="#fff" textLength="27.25" lengthAdjust="spacingAndGlyphs" stroke="#fff" stroke-width=".3">0.8730</text>
<text x="229.25" y="116" font-size="9.6" fill="#fff" textLength="27.25" lengthAdjust="spacingAndGlyphs" stroke="#fff" stroke-width=".3">0.8722</text>
<text x="260.5" y="116" font-size="9.6" fill="#fff" textLength="27.25" lengthAdjust="spacingAndGlyphs" stroke="#fff" stroke-width=".3">0.8725</text>
<text x="988" y="118" font-size="9.6" fill="#fff" textLength="27.2" lengthAdjust="spacingAndGlyphs" stroke="#fff" stroke-width=".3">0.8895</text>
<text x="988" y="156" font-size="9.6" fill="#fff" textLength="27.2" lengthAdjust="spacingAndGlyphs" stroke="#fff" stroke-width=".3">0.8875</text>
<text x="988" y="195" font-size="9.6" fill="#fff" textLength="27.2" lengthAdjust="spacingAndGlyphs" stroke="#fff" stroke-width=".3">0.8855</text>
<text x="988" y="233" font-size="9.6" fill="#fff" textLength="27.2" lengthAdjust="spacingAndGlyphs" stroke="#fff" stroke-width=".3">0.8835</text>
<text x="988" y="271" font-size="9.6" fill="#fff" textLength="27.2" lengthAdjust="spacingAndGlyphs" stroke="#fff" stroke-width=".3">0.8815</text>
<text x="988" y="310" font-size="9.6" fill="#fff" textLength="27.2" lengthAdjust="spacingAndGlyphs" stroke="#fff" stroke-width=".3">0.8795</text>
<text x="988" y="348" font-size="9.6" fill="#fff" textLength="27.2" lengthAdjust="spacingAndGlyphs" stroke="#fff" stroke-width=".3">0.8775</text>
<text x="988" y="386" font-size="9.6" fill="#fff" textLength="27.2" lengthAdjust="spacingAndGlyphs" stroke="#fff" stroke-width=".3">0.8755</text>
<text x="988" y="425" font-size="9.6" fill="#fff" textLength="27.2" lengthAdjust="spacingAndGlyphs" stroke="#fff" stroke-width=".3">0.8735</text>
<text x="988" y="463" font-size="9.6" fill="#fff" textLength="27.2" lengthAdjust="spacingAndGlyphs" stroke="#fff" stroke-width=".3">0.8715</text>
<text x="988" y="501" font-size="9.6" fill="#fff" textLength="27.2" lengthAdjust="spacingAndGlyphs" stroke="#fff" stroke-width=".3">0.8695</text>
<text x="988" y="540" font-size="9.6" fill="#fff" textLength="27.2" lengthAdjust="spacingAndGlyphs" stroke="#fff" stroke-width=".3">0.8675</text>
<text x="988" y="578" font-size="9.6" fill="#fff" textLength="27.2" lengthAdjust="spacingAndGlyphs" stroke="#fff" stroke-width=".3">0.8655</text>
<rect class="c" x="985" y="435" width="34" height="11" fill="#fff"/>
<text x="988" y="444" font-size="9.6" fill="#000" textLength="27.2" lengthAdjust="spacingAndGlyphs" stroke="#000" stroke-width=".25">0.8725</text>
<text x="82.4" y="598" font-size="9.6" fill="#fff" textLength="50.2" lengthAdjust="spacingAndGlyphs" stroke="#fff" stroke-width=".3">21 Jan 2014</text>
<text x="146.7" y="598" font-size="9.6" fill="#fff" textLength="52.3" lengthAdjust="spacingAndGlyphs" stroke="#fff" stroke-width=".3">22 Jan 09:00</text>
<text x="210.7" y="598" font-size="9.6" fill="#fff" textLength="52.3" lengthAdjust="spacingAndGlyphs" stroke="#fff" stroke-width=".3">23 Jan 01:00</text>
<text x="274.7" y="598" font-size="9.6" fill="#fff" textLength="52.3" lengthAdjust="spacingAndGlyphs" stroke="#fff" stroke-width=".3">23 Jan 17:00</text>
<text x="338.7" y="598" font-size="9.6" fill="#fff" textLength="52.3" lengthAdjust="spacingAndGlyphs" stroke="#fff" stroke-width=".3">24 Jan 09:00</text>
<text x="402.7" y="598" font-size="9.6" fill="#fff" textLength="52.3" lengthAdjust="spacingAndGlyphs" stroke="#fff" stroke-width=".3">27 Jan 01:00</text>
<text x="466.7" y="598" font-size="9.6" fill="#fff" textLength="52.3" lengthAdjust="spacingAndGlyphs" stroke="#fff" stroke-width=".3">27 Jan 17:00</text>
<text x="530.7" y="598" font-size="9.6" fill="#fff" textLength="52.3" lengthAdjust="spacingAndGlyphs" stroke="#fff" stroke-width=".3">28 Jan 09:00</text>
<text x="594.7" y="598" font-size="9.6" fill="#fff" textLength="52.3" lengthAdjust="spacingAndGlyphs" stroke="#fff" stroke-width=".3">29 Jan 01:00</text>
<text x="658.7" y="598" font-size="9.6" fill="#fff" textLength="52.3" lengthAdjust="spacingAndGlyphs" stroke="#fff" stroke-width=".3">29 Jan 17:00</text>
</g>
<g id="covers" class="c">
<rect x="1" y="1" width="342" height="26" fill="#ffffff"/>
<rect x="5" y="26" width="69" height="742" fill="#ffffff"/>
<rect x="5" y="565" width="83" height="203" fill="#ffffff"/>
<rect x="5" y="603" width="1019" height="165" fill="#ffffff"/>
<rect x="88" y="605" width="76" height="1" fill="#1c1c1c"/>
<rect x="250" y="605" width="774" height="1" fill="#1c1c1c"/>
<rect x="961" y="607" width="60" height="1" fill="#f3efcf"/>
<rect x="0" y="27" width="5" height="741" fill="#ece9d8"/>
<rect x="0" y="1" width="1" height="25" fill="#0a3fd8"/>
<rect x="0" y="46" width="5" height="1" fill="#aca899"/>
<rect x="0" y="47" width="5" height="1" fill="#ffffff"/>
<rect x="0" y="73" width="5" height="1" fill="#aca899"/>
<rect x="0" y="74" width="5" height="1" fill="#ffffff"/>
<rect x="0" y="101" width="5" height="1" fill="#aca899"/>
<rect x="3" y="51" width="2" height="1" fill="#b5b19f"/>
<rect x="3" y="53" width="2" height="1" fill="#b5b19f"/>
<rect x="3" y="55" width="2" height="1" fill="#b5b19f"/>
<rect x="3" y="57" width="2" height="1" fill="#b5b19f"/>
<rect x="3" y="59" width="2" height="1" fill="#b5b19f"/>
<rect x="3" y="61" width="2" height="1" fill="#b5b19f"/>
<rect x="3" y="63" width="2" height="1" fill="#b5b19f"/>
<rect x="3" y="65" width="2" height="1" fill="#b5b19f"/>
<rect x="3" y="67" width="2" height="1" fill="#b5b19f"/>
<rect x="3" y="69" width="2" height="1" fill="#b5b19f"/>
<rect x="3" y="78" width="2" height="1" fill="#b5b19f"/>
<rect x="3" y="80" width="2" height="1" fill="#b5b19f"/>
<rect x="3" y="82" width="2" height="1" fill="#b5b19f"/>
<rect x="3" y="84" width="2" height="1" fill="#b5b19f"/>
<rect x="3" y="86" width="2" height="1" fill="#b5b19f"/>
<rect x="3" y="88" width="2" height="1" fill="#b5b19f"/>
<rect x="3" y="90" width="2" height="1" fill="#b5b19f"/>
<rect x="3" y="92" width="2" height="1" fill="#b5b19f"/>
<rect x="3" y="94" width="2" height="1" fill="#b5b19f"/>
<rect x="3" y="96" width="2" height="1" fill="#b5b19f"/>
<rect x="3" y="103" width="2" height="13" fill="#6f8fe0"/>
<rect x="3" y="117" width="1" height="259" fill="#8d8a7c"/>
<rect x="4" y="138" width="1" height="120" fill="#10e080"/>
<rect x="0" y="376" width="5" height="1" fill="#aca899"/>
<rect x="0" y="378" width="5" height="1" fill="#ffffff"/>
<rect x="3" y="380" width="2" height="10" fill="#6f8fe0"/>
<rect x="3" y="392" width="1" height="229" fill="#8d8a7c"/>
<rect x="4" y="392" width="1" height="230" fill="#f7f6f0"/>
<rect x="0" y="622" width="4" height="1" fill="#aca899"/>
<rect x="0" y="624" width="4" height="1" fill="#ffffff"/>
<rect x="4" y="576" width="1" height="192" fill="#ffffff"/>
<rect x="1" y="643" width="3" height="71" fill="#8aa6ea"/>
<rect x="0" y="715" width="4" height="1" fill="#aca899"/>
<rect x="0" y="738" width="4" height="30" fill="#2d8a3a"/>
</g>
</svg></body></html>
